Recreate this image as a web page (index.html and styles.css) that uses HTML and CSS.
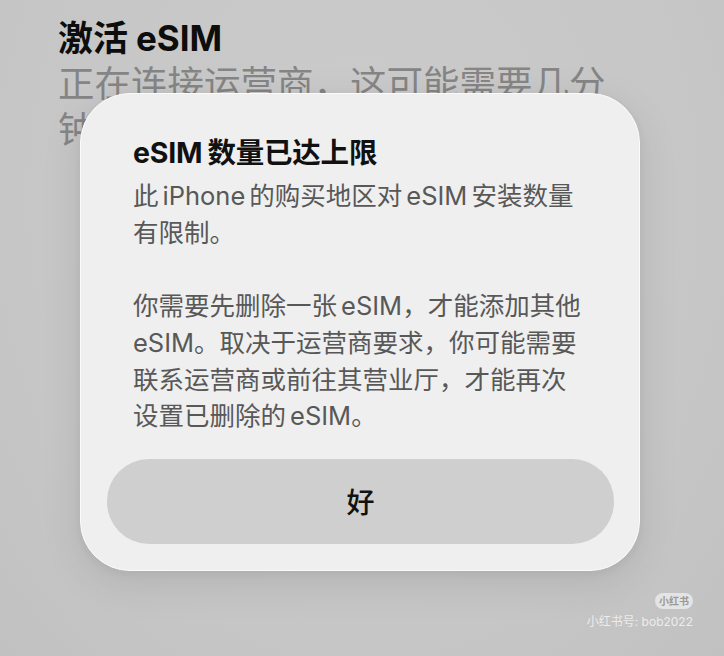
FILE: index.html
```html
<!DOCTYPE html>
<html lang="zh-CN">
<head>
<meta charset="utf-8">
<title>激活 eSIM</title>
<link rel="stylesheet" href="styles.css">
</head>
<body>
<div class="screen">
  <header class="page-head">
    <h1 class="page-title">激活<span class="lat">eSIM</span></h1>
    <p class="page-sub">正在连接运营商，这可能需要几分<br>钟</p>
  </header>

  <div class="alert" role="alertdialog">
    <h2 class="alert-title"><span class="lat-r">eSIM</span>数量已达上限</h2>
    <div class="alert-body">
      <p>此<span class="lat">iPhone</span>的购买地区对<span class="lat">eSIM</span>安装数量<br>有限制。</p>
      <p>你需要先删除一张<span class="lat-l">eSIM</span>，才能添加其他<br>eSIM。取决于运营商要求，你可能需要<br>联系运营商或前往其营业厅，才能再次<br>设置已删除的<span class="lat-l">eSIM</span>。</p>
    </div>
    <button class="alert-btn" type="button">好</button>
  </div>

  <div class="watermark">
    <span class="wm-badge">小红书</span>
    <span class="wm-id">小红书号: bob2022</span>
  </div>
</div>
</body>
</html>
```

FILE: styles.css
```css
* { box-sizing: border-box; }

html, body {
  margin: 0;
  padding: 0;
}

body {
  width: 724px;
  height: 656px;
  overflow: hidden;
  font-family: "Inter", "Noto Sans CJK SC", sans-serif;
  background: #c8c8c8;
}

.screen {
  position: relative;
  width: 724px;
  height: 656px;
  background: radial-gradient(ellipse at 50% 30%, #cbcbcb 0%, #c6c6c6 70%, #c1c1c1 100%);
  padding: 17px 0 0 58px;
}

.page-title {
  margin: 0;
  font-size: 35px;
  line-height: 42px;
  font-weight: 700;
  color: #0d0d0d;
}

.page-title .lat { margin-left: 8px; }

.page-sub {
  margin: 2px 0 0;
  font-size: 36.5px;
  line-height: 46px;
  font-weight: 400;
  color: #858585;
  white-space: nowrap;
}

.alert {
  position: absolute;
  left: 80px;
  top: 93px;
  width: 560px;
  height: 478px;
  border-radius: 50px;
  background: #efefef;
  border: 1.5px solid #fbfbfb;
  box-shadow: 0 12px 40px rgba(0, 0, 0, 0.10), 0 2px 10px rgba(0, 0, 0, 0.05);
  padding: 40px 26px 0 52px;
  display: flex;
  flex-direction: column;
}

.alert-title {
  margin: 0;
  font-size: 28.5px;
  line-height: 38px;
  font-weight: 700;
  color: #111;
  white-space: nowrap;
  letter-spacing: -0.2px;
}

.lat-r { margin-right: 5px; }
.lat { margin: 0 4px; }
.lat-l { margin-left: 4px; }

.alert-body {
  margin-top: 6px;
  font-size: 25.5px;
  line-height: 36.7px;
  color: #585858;
  white-space: nowrap;
}

.alert-body p { margin: 0; }
.alert-body p + p { margin-top: 36.7px; }

.alert-btn {
  margin-top: 24px;
  margin-left: -26px;
  width: 507px;
  height: 85px;
  border: none;
  border-radius: 42px;
  background: #cfcfcf;
  font-family: "Noto Sans CJK SC", sans-serif;
  font-size: 28px;
  font-weight: 500;
  color: #111;
  padding: 0;
}

.watermark {
  position: absolute;
  right: 31px;
  top: 593px;
  display: flex;
  flex-direction: column;
  align-items: flex-end;
  gap: 5px;
}

.wm-badge {
  font-size: 10px;
  line-height: 16px;
  font-weight: 700;
  padding: 0 4px;
  border-radius: 8px;
  background: #e4e4e4;
  color: #9a9a9a;
}

.wm-id {
  font-size: 12px;
  line-height: 15px;
  color: #ececec;
  white-space: nowrap;
}
```
